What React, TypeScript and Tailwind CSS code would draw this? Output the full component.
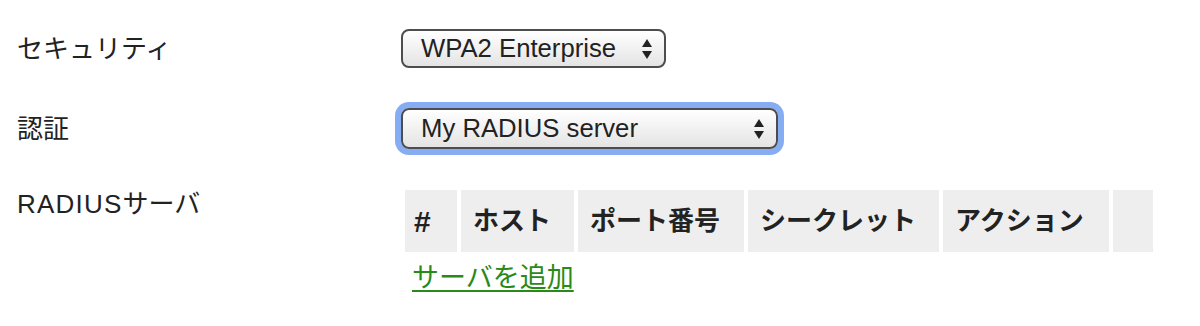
import React from "react";

const FONT = '"Liberation Sans", "Noto Sans CJK JP", sans-serif';

const HEADERS = [
  { label: "#", width: "w-[52px]" },
  { label: "ホスト", width: "w-[113px]" },
  { label: "ポート番号", width: "w-[166px]" },
  { label: "シークレット", width: "w-[191px]" },
  { label: "アクション", width: "w-[166px]" },
  { label: "", width: "w-[40px]" },
];

function Arrows() {
  return (
    <svg width="10" height="20" viewBox="0 0 10 20" className="shrink-0">
      <polygon points="5,0 10,8 0,8" fill="#222" />
      <polygon points="0,12 10,12 5,20" fill="#222" />
    </svg>
  );
}

function FakeSelect({ value, className }: { value: string; className: string }) {
  return (
    <div
      className={`flex items-center justify-between rounded-[8px] border-2 border-[#4d4d4d] bg-linear-to-b from-white to-[#e4e4e4] pl-[18px] pr-[12px] text-[25.7px] leading-none text-[#222] ${className}`}
    >
      <span>{value}</span>
      <Arrows />
    </div>
  );
}

export default function App() {
  return (
    <div className="min-h-[326px] w-[1200px] bg-white pl-[17px] pt-[29px] text-[#222]" style={{ fontFamily: FONT }}>
      <div className="flex items-center">
        <div className="w-[384px] text-[26px] leading-[36px]">セキュリティ</div>
        <FakeSelect value="WPA2 Enterprise" className="h-[39px] w-[265px]" />
      </div>

      <div className="mt-[40px] flex items-center">
        <div className="w-[384px] text-[26px] leading-[36px]">認証</div>
        <FakeSelect value="My RADIUS server" className="h-[41px] w-[377px] ring-[6px] ring-[#86acf3]" />
      </div>

      <div className="mt-[37px] flex items-start">
        <div className="w-[384px] text-[26px] leading-[36px]">
          <span className="tracking-[1.2px]">RADIUS</span>サーバ
        </div>
        <div>
          <table className="border-separate border-spacing-[4px]">
            <thead>
              <tr>
                {HEADERS.map((h, i) => (
                  <th
                    key={i}
                    className={`${h.width} h-[62px] whitespace-nowrap bg-[#eeeeee] py-0 text-left align-middle font-bold text-[#222] ${
                      h.label === "#" ? "pl-[9px] pr-0 text-[30px]" : "px-[12px] text-[26px]"
                    }`}
                  >
                    {h.label}
                  </th>
                ))}
              </tr>
            </thead>
          </table>
          <a
            href="#"
            className="mt-[4px] ml-[11px] inline-block text-[27px] leading-[36px] text-[#2a8a17] underline decoration-2 underline-offset-[3px]"
          >
            サーバを追加
          </a>
        </div>
      </div>
    </div>
  );
}
